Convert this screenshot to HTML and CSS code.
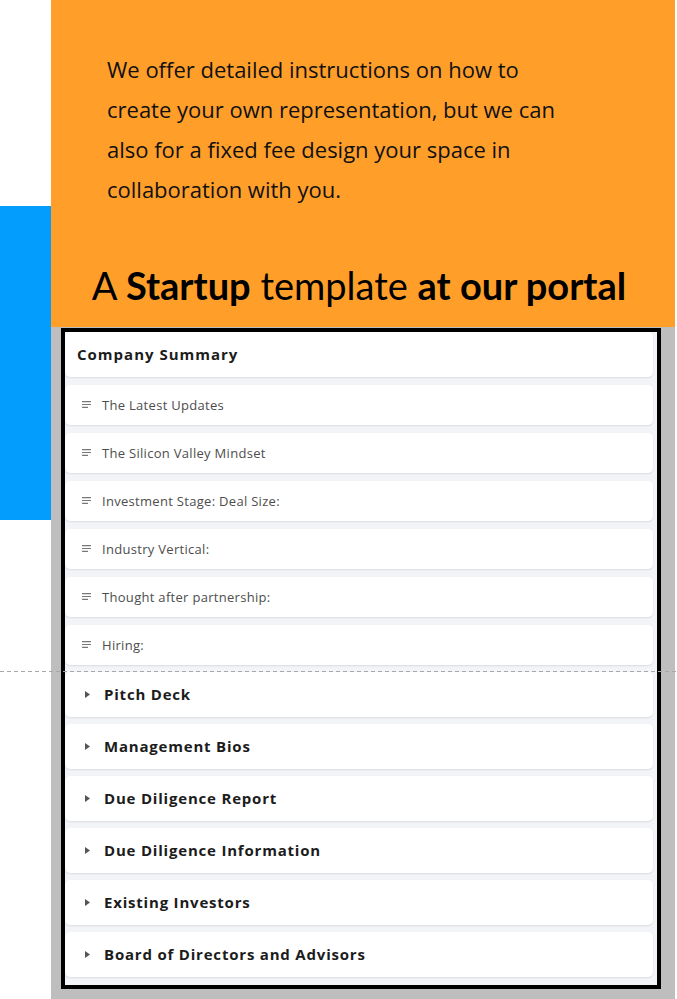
FILE: index.html
```html
<!DOCTYPE html>
<html lang="en">
<head>
    <meta charset="UTF-8">
    <meta name="viewport" content="width=device-width, initial-scale=1.0">
    <title>Startup template</title>
    <link rel="stylesheet" href="styles.css">
</head>
<body>
    <div class="side">
        <div class="side-strip"></div>
    </div>

    <div class="main">
        <div class="intro">
            <p class="intro-text">We offer detailed instructions on how to create your own representation, but we can also for a fixed fee design your space in collaboration with you.</p>
            <h2 class="intro-title">A <b>Startup</b> template <b>at our portal</b></h2>
        </div>

        <div class="preview">
            <div class="shot">
                <div class="card card-head">Company Summary</div>

                <div class="card card-item">
                    <svg class="ico-notes" viewBox="0 0 9 7" width="9" height="7"><path d="M0 .6h9M0 3.5h9M0 6.4h6" /></svg>
                    <span>The Latest Updates</span>
                </div>
                <div class="card card-item">
                    <svg class="ico-notes" viewBox="0 0 9 7" width="9" height="7"><path d="M0 .6h9M0 3.5h9M0 6.4h6" /></svg>
                    <span>The Silicon Valley Mindset</span>
                </div>
                <div class="card card-item">
                    <svg class="ico-notes" viewBox="0 0 9 7" width="9" height="7"><path d="M0 .6h9M0 3.5h9M0 6.4h6" /></svg>
                    <span>Investment Stage: Deal Size:</span>
                </div>
                <div class="card card-item">
                    <svg class="ico-notes" viewBox="0 0 9 7" width="9" height="7"><path d="M0 .6h9M0 3.5h9M0 6.4h6" /></svg>
                    <span>Industry Vertical:</span>
                </div>
                <div class="card card-item">
                    <svg class="ico-notes" viewBox="0 0 9 7" width="9" height="7"><path d="M0 .6h9M0 3.5h9M0 6.4h6" /></svg>
                    <span>Thought after partnership:</span>
                </div>
                <div class="card card-item card-last">
                    <svg class="ico-notes" viewBox="0 0 9 7" width="9" height="7"><path d="M0 .6h9M0 3.5h9M0 6.4h6" /></svg>
                    <span>Hiring:</span>
                </div>

                <div class="card card-section">
                    <svg class="ico-caret" viewBox="0 0 5 7" width="5" height="7"><path d="M0 0L5 3.5L0 7z" /></svg>
                    <span>Pitch Deck</span>
                </div>
                <div class="card card-section">
                    <svg class="ico-caret" viewBox="0 0 5 7" width="5" height="7"><path d="M0 0L5 3.5L0 7z" /></svg>
                    <span>Management Bios</span>
                </div>
                <div class="card card-section">
                    <svg class="ico-caret" viewBox="0 0 5 7" width="5" height="7"><path d="M0 0L5 3.5L0 7z" /></svg>
                    <span>Due Diligence Report</span>
                </div>
                <div class="card card-section">
                    <svg class="ico-caret" viewBox="0 0 5 7" width="5" height="7"><path d="M0 0L5 3.5L0 7z" /></svg>
                    <span>Due Diligence Information</span>
                </div>
                <div class="card card-section">
                    <svg class="ico-caret" viewBox="0 0 5 7" width="5" height="7"><path d="M0 0L5 3.5L0 7z" /></svg>
                    <span>Existing Investors</span>
                </div>
                <div class="card card-section">
                    <svg class="ico-caret" viewBox="0 0 5 7" width="5" height="7"><path d="M0 0L5 3.5L0 7z" /></svg>
                    <span>Board of Directors and Advisors</span>
                </div>
            </div>
        </div>
    </div>

    <!-- page fold guide drawn over the content -->
    <div class="fold-line"></div>
</body>
</html>
```

FILE: styles.css
```css
body {
    margin: 0;
    padding: 0;
    display: flex;
    width: 677px;
    min-height: 999px;
    background-color: #ffffff;
    font-family: "Open Sans", Arial, sans-serif;
    position: relative;
}
.side {
    width: 51px;
    flex-shrink: 0;
}
.side-strip {
    margin-top: 206px;
    height: 314px;
    background-color: #039dfe;
}
.main {
    width: 624px;
    display: flex;
    flex-direction: column;
}
.intro {
    background-color: #ff9f2a;
    padding: 49px 0 18px 0;
}
.intro-text {
    margin: 0 0 0 56px;
    max-width: 470px;
    font-family: "Open Sans", Arial, sans-serif;
    font-size: 22px;
    line-height: 40px;
    color: #111;
}
.intro-title {
    margin: 54px 0 0 0;
    padding-right: 8px;
    font-family: Lato, "Open Sans", sans-serif;
    font-size: 38px;
    font-weight: 400;
    line-height: 1.2;
    text-align: center;
    color: #000;
}
.intro-title b {
    font-weight: 700;
}
.preview {
    flex: 1;
    background-color: #bebebe;
    padding: 1px 14px 11px 10px;
}
.shot {
    border: 4px solid #000;
    background-color: #f2f4f8;
    padding: 0 4px 8px 0;
    display: flex;
    flex-direction: column;
}
.card {
    background-color: #fff;
    border-radius: 5px;
    box-shadow: 0 1px 2px rgba(0,0,0,0.1);
    display: flex;
    align-items: center;
}
.card-head {
    height: 45px;
    padding-left: 12px;
    margin-bottom: 8px;
    font-size: 15px;
    font-weight: 700;
    letter-spacing: 1px;
    color: #1c1c1c;
}
.card-item {
    height: 40px;
    padding-left: 17px;
    margin-bottom: 8px;
    font-size: 13px;
    letter-spacing: 0.3px;
    color: #4d4d4d;
}
.card-item.card-last {
    margin-bottom: 7px;
}
.ico-notes {
    margin-right: 11px;
    fill: none;
    stroke: #777;
    stroke-width: 1.2;
}
.card-section {
    height: 45px;
    padding-left: 20px;
    margin-bottom: 7px;
    font-size: 15px;
    font-weight: 700;
    letter-spacing: 0.8px;
    color: #1c1c1c;
}
.card-section:last-child {
    margin-bottom: 0;
}
.ico-caret {
    margin-right: 14px;
    fill: #555;
}
.fold-line {
    position: absolute;
    top: 671px;
    left: 0;
    width: 677px;
    height: 1px;
    background: repeating-linear-gradient(to right, #a8a8a8 0 4px, transparent 4px 7px);
}
```
